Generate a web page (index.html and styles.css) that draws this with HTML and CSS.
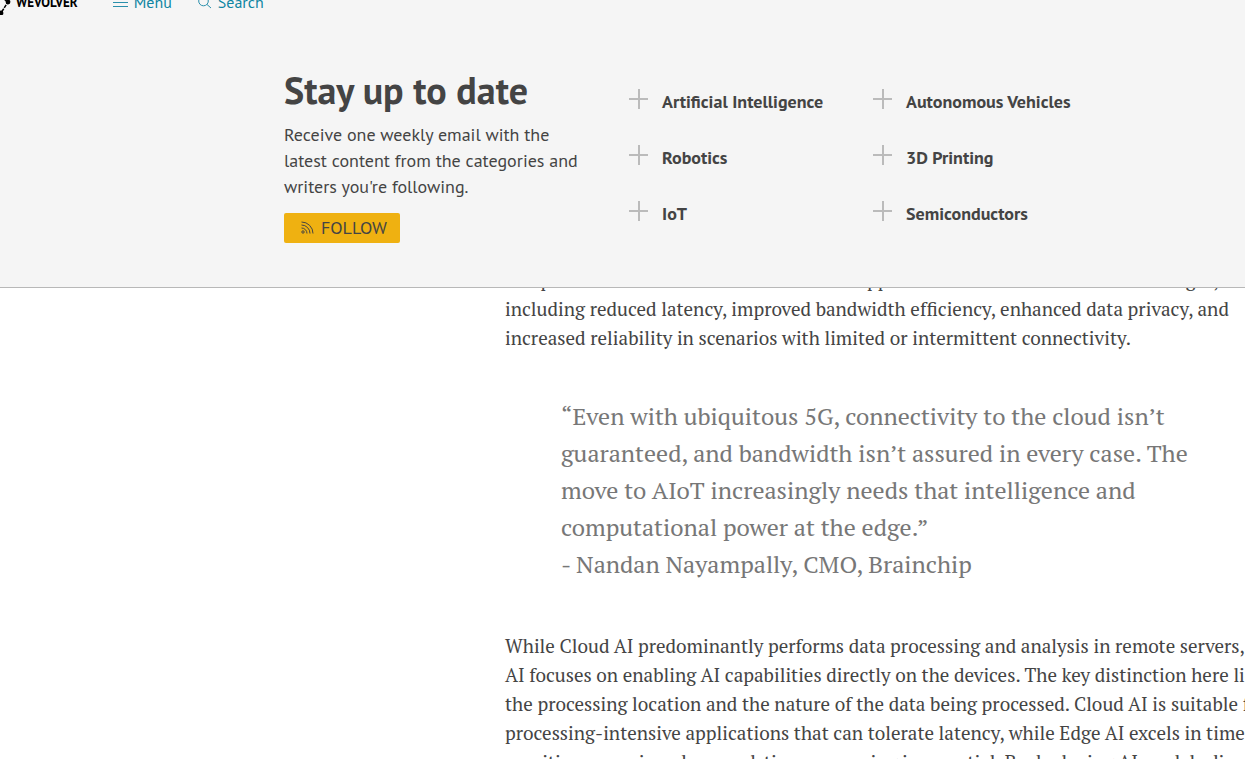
FILE: index.html
```html
<!DOCTYPE html>
<html lang="en">
<head>
<meta charset="utf-8">
<title>Wevolver</title>
<link rel="stylesheet" href="styles.css">
</head>
<body>
<header class="panel">
  <nav class="topbar">
    <a class="logo" href="#">
      <svg class="logo-mark" viewBox="0 0 12 24" aria-hidden="true"><path d="M0 5L8 11L1 22" fill="none" stroke="#000" stroke-width="1.500" stroke-dasharray="3.500 1"/><circle cx="8" cy="11" r="2.400"/><circle cx="1" cy="22" r="2.400"/></svg>
      <span>WEVOLVER</span>
    </a>
    <a class="toplink" href="#">
      <svg class="icon-menu" viewBox="0 0 16 16" aria-hidden="true"><path d="M1 4.500h15M1 8.500h15M1 12.500h15"/></svg>
      <span>Menu</span>
    </a>
    <a class="toplink" href="#">
      <svg class="icon-search" viewBox="0 0 14 16" aria-hidden="true"><circle cx="5.500" cy="7" r="4.800"/><path d="M9 10.500L13 14"/></svg>
      <span>Search</span>
    </a>
  </nav>
  <section class="subscribe">
    <div class="intro">
      <h2 class="title">Stay up to date</h2>
      <p class="lead">Receive one weekly email with the<br>latest content from the categories and<br>writers you're following.</p>
      <button class="follow" type="button">
        <svg class="icon-feed" viewBox="0 0 13 13" aria-hidden="true"><circle cx="2" cy="11" r="1.200"/><path d="M.5 7a5.500 5.500 0 0 1 5.500 5.500M.5 4a8.500 8.500 0 0 1 8.500 8.500M.5 1a11.500 11.500 0 0 1 11.500 11.500"/></svg>
        <span>FOLLOW</span>
      </button>
    </div>
    <div class="topics">
      <button class="topic" type="button"><span class="plus"></span>Artificial Intelligence</button>
      <button class="topic" type="button"><span class="plus"></span>Autonomous Vehicles</button>
      <button class="topic" type="button"><span class="plus"></span>Robotics</button>
      <button class="topic" type="button"><span class="plus"></span>3D Printing</button>
      <button class="topic" type="button"><span class="plus"></span>IoT</button>
      <button class="topic" type="button"><span class="plus"></span>Semiconductors</button>
    </div>
  </section>
</header>
<main class="viewport">
  <article class="article">
    <p class="text">computation near to the data source. The approach offers several crucial advantages,<br>including reduced latency, improved bandwidth efficiency, enhanced data privacy, and<br>increased reliability in scenarios with limited or intermittent connectivity.</p>
    <blockquote class="quote">“Even with ubiquitous 5G, connectivity to the cloud isn’t<br>guaranteed, and bandwidth isn’t assured in every case. The<br>move to AIoT increasingly needs that intelligence and<br>computational power at the edge.”<br>- Nandan Nayampally, CMO, Brainchip</blockquote>
    <p class="text">While Cloud AI predominantly performs data processing and analysis in remote servers, Edge<br>AI focuses on enabling AI capabilities directly on the devices. The key distinction here lies in<br>the processing location and the nature of the data being processed. Cloud AI is suitable for<br>processing-intensive applications that can tolerate latency, while Edge AI excels in time-<br>sensitive scenarios where real-time processing is essential. By deploying AI models directly</p>
  </article>
</main>
</body>
</html>
```
FILE: styles.css
```css
* { box-sizing: border-box; }
body {
  margin: 0;
  height: 100vh;
  overflow: hidden;
  display: flex;
  flex-direction: column;
  background: #fff;
  color: #444;
  font-family: "PT Sans", "Open Sans", sans-serif;
}
a { text-decoration: none; }
button {
  border: 0;
  padding: 0;
  background: none;
  color: inherit;
  font-family: inherit;
  cursor: pointer;
}
.panel {
  flex: none;
  background: #f5f5f5;
  border-bottom: 1px solid #b8b8b8;
  padding-bottom: 44px;
}
.topbar {
  display: flex;
  align-items: center;
  height: 32px;
  margin-top: -14px;
}
.logo {
  display: flex;
  align-items: center;
  gap: 4px;
  margin-right: 34px;
  padding-top: 2px;
  color: #000;
  font: bold 13px/24px "PT Sans", Lato, sans-serif;
}
.logo-mark { width: 12px; height: 24px; }
.toplink {
  display: flex;
  align-items: center;
  gap: 6px;
  margin-right: 26px;
  color: #0e85a3;
  font-size: 16px;
  line-height: 24px;
}
.toplink svg { height: 16px; fill: none; stroke: #2a8fab; stroke-width: 1; }
.icon-menu { width: 16px; }
.icon-search { width: 14px; }
.subscribe {
  display: flex;
  gap: 50px;
  padding: 48px 24px 0 284px;
}
.intro { flex: none; width: 295px; white-space: nowrap; }
.title { margin: 0 0 8px; font-size: 38px; line-height: 48px; }
.lead { margin: 0 0 13px; font-size: 18px; line-height: 26px; }
.follow {
  display: flex;
  align-items: center;
  gap: 7px;
  height: 30px;
  padding: 0 13px 2px 17px;
  border-radius: 2px;
  background: #efb111;
  font-size: 18px;
}
.icon-feed { width: 13px; height: 13px; fill: none; stroke: #444; stroke-width: 1; }
.topics {
  display: grid;
  grid-template-columns: 244px 244px;
  grid-auto-rows: 56px;
  align-content: start;
  padding-top: 7px;
}
.topic {
  display: flex;
  align-items: center;
  gap: 14px;
  height: 56px;
  font-size: 18px;
  font-weight: bold;
  white-space: nowrap;
}
.plus {
  width: 19px;
  height: 24px;
  background:
    linear-gradient(#bbb, #bbb) left 0 top 9px / 19px 2px no-repeat,
    linear-gradient(#bbb, #bbb) left 9px top 0 / 2px 20px no-repeat;
}
.viewport { flex: 1; min-height: 0; overflow: hidden; }
.article {
  margin-top: -23px;
  padding-left: 505px;
  font-family: "PT Serif", "Liberation Serif", serif;
  white-space: nowrap;
}
.text { margin: 0; font-size: 19px; line-height: 29px; }
.quote {
  margin: 46px 0 48px 56px;
  color: #777;
  font-size: 24px;
  line-height: 37px;
}
```
